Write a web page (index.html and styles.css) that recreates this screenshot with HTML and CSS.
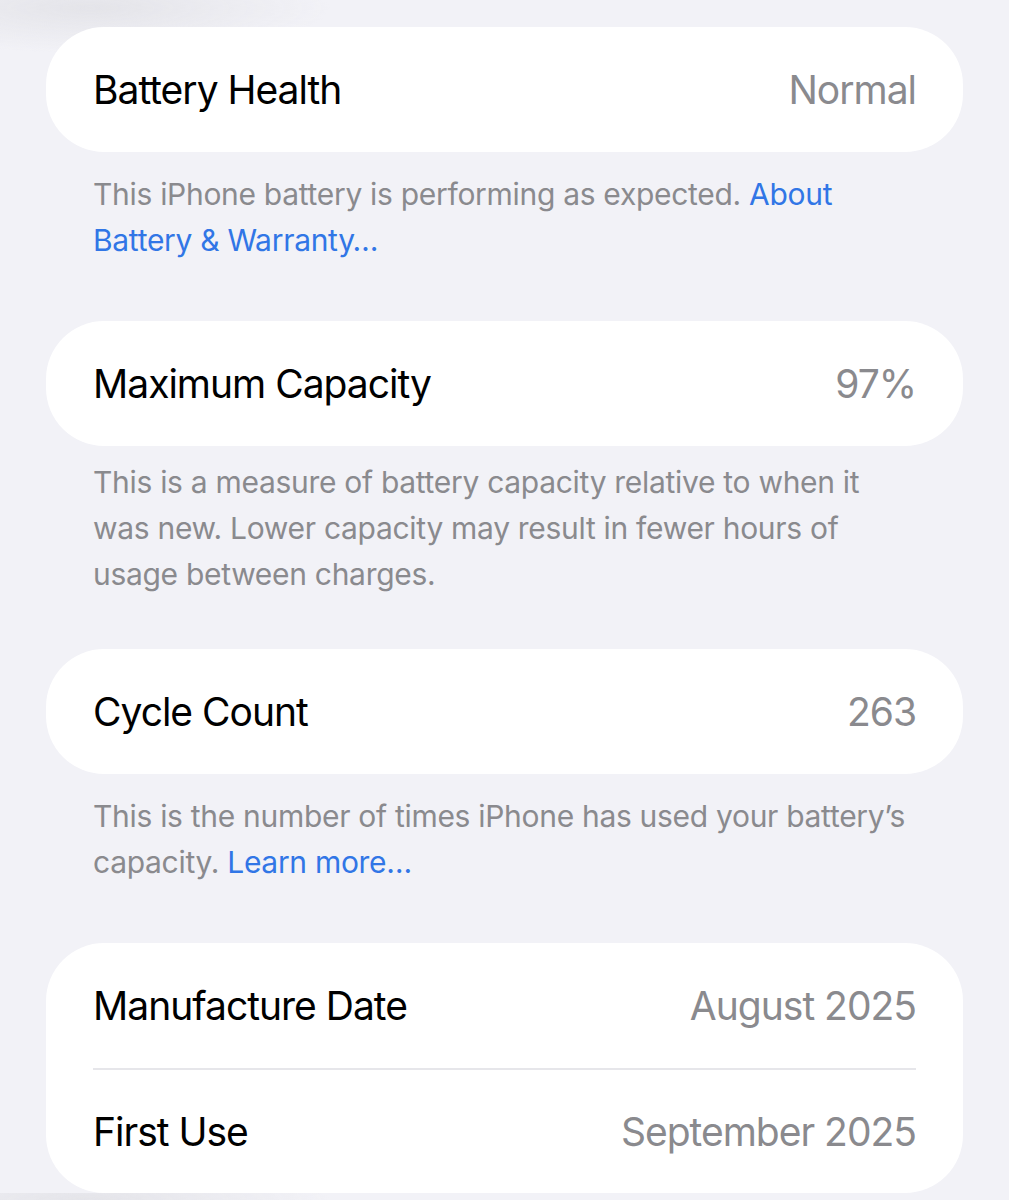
FILE: index.html
```html
<!DOCTYPE html>
<html lang="en">

<head>
    <meta charset="UTF-8">
    <meta name="viewport" content="width=device-width, initial-scale=1.0">
    <title>Battery Health</title>
    <link rel="stylesheet" href="styles.css">
</head>

<body>

    <div class="container">
        <div class="group">
            <div class="card">
                <div class="row">
                    <span class="label">Battery Health</span>
                    <span class="value">Normal</span>
                </div>
            </div>
            <p class="note">This iPhone battery is performing as expected. <a href="#">About Battery &amp; Warranty…</a></p>
        </div>

        <div class="group">
            <div class="card">
                <div class="row">
                    <span class="label">Maximum Capacity</span>
                    <span class="value">97%</span>
                </div>
            </div>
            <p class="note note-tight">This is a measure of battery capacity relative to when it was new. Lower capacity may result in fewer hours of usage between charges.</p>
        </div>

        <div class="group">
            <div class="card">
                <div class="row">
                    <span class="label">Cycle Count</span>
                    <span class="value">263</span>
                </div>
            </div>
            <p class="note">This is the number of times iPhone has used your battery’s capacity. <a href="#">Learn more…</a></p>
        </div>

        <div class="group">
            <div class="card">
                <div class="row">
                    <span class="label">Manufacture Date</span>
                    <span class="value">August 2025</span>
                </div>
                <div class="row">
                    <span class="label">First Use</span>
                    <span class="value">September 2025</span>
                </div>
            </div>
        </div>
    </div>

</body>

</html>
```

FILE: styles.css
```css
body {
    font-family: 'Inter', 'Noto Sans', sans-serif;
    background: radial-gradient(ellipse 240px 45px at 90px 8px, #e4e4e9, rgba(242, 242, 247, 0)), #f2f2f7;
    margin: 0;
    padding: 0;
    color: #000;
}

.container {
    padding: 27px 46px 0;
}

.card {
    background-color: #fff;
    border-radius: 58px;
    overflow: hidden;
}

.row {
    display: flex;
    justify-content: space-between;
    align-items: center;
    height: 125px;
    margin: 0 47px;
    box-sizing: border-box;
}

.row + .row {
    border-top: 2px solid #e6e6ea;
}

.label {
    font-size: 39px;
    letter-spacing: -1px;
}

.value {
    font-size: 39px;
    letter-spacing: -1px;
    color: #8a8a8e;
}

.note {
    margin: 19px 47px 58px;
    font-size: 30px;
    line-height: 46px;
    letter-spacing: -0.3px;
    color: #8a8a8e;
}

.note-tight {
    margin-top: 13px;
    margin-bottom: 52px;
}

.note a {
    color: #3176e6;
    text-decoration: none;
}
```
